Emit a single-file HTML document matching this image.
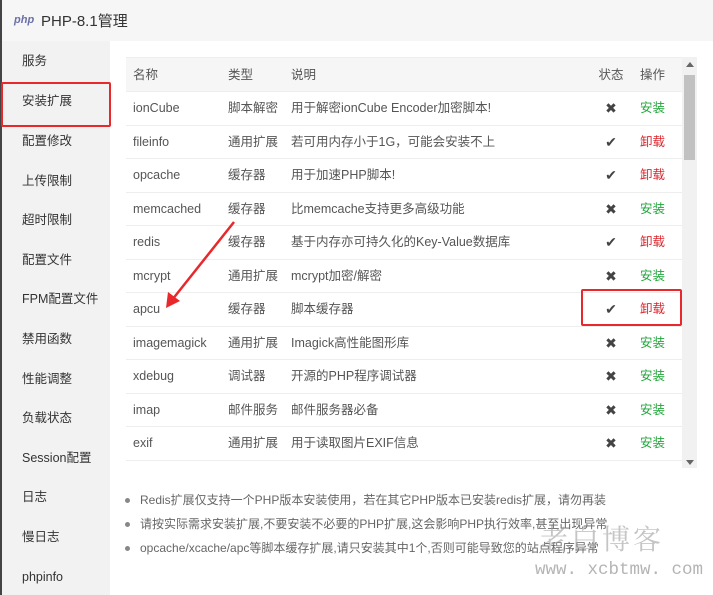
<!DOCTYPE html><html><head><meta charset="utf-8"><style>
*{margin:0;padding:0;box-sizing:border-box}
body{width:713px;height:595px;overflow:hidden;background:#fff;font-family:"Liberation Sans","Noto Sans CJK SC",sans-serif;position:relative;color:#555}
.hdr{position:absolute;left:0;top:0;width:713px;height:41px;background:#f6f6f6;border-left:2px solid #444}
.hdr .logo{position:absolute;left:12px;top:14px;font:italic bold 11px "Liberation Sans",sans-serif;color:#6a6fa8}
.hdr .t{position:absolute;left:39px;top:10px;font-size:15px;color:#333}
.side{position:absolute;left:0;top:41px;width:110px;height:554px;background:#f2f2f2;border-left:2px solid #444}
.side div{position:absolute;left:20px;font-size:12.5px;color:#333;line-height:16px}
.redbox{position:absolute;border:2px solid #e8282a;border-radius:2px}
table{position:absolute;left:0;top:0;width:556px;border-collapse:collapse;font-size:12.5px}
td{height:33.5px;border-bottom:1px solid #eee;color:#555;white-space:nowrap;vertical-align:middle;line-height:16px}
tr.h td{background:#f6f6f6;color:#555}
.c1{padding-left:7px;width:102px}.c2{width:63px}.st{width:42px;text-align:center;color:#444;font-size:14px}.op{width:50px;padding-left:8px}
.g{color:#20a53a}.r{color:#d9282f}
.wrap{position:absolute;left:126px;top:57px;width:556px;height:411px;overflow:hidden;border-top:1px solid #eee}
.sb{position:absolute;left:682px;top:57px;width:15px;height:411px;background:#f1f1f1}
.thumb{position:absolute;left:684px;top:75px;width:11px;height:85px;background:#c1c1c1}
.notes{position:absolute;left:125px;font-size:12px;color:#666;white-space:nowrap}
.notes span{display:inline-block;width:5px;height:5px;border-radius:50%;background:#888;margin-right:10px;vertical-align:middle}
.wm1{position:absolute;left:540px;top:518px;font:28px "Noto Serif CJK SC",serif;color:rgba(150,150,150,.55);letter-spacing:3px;white-space:nowrap}
.wm2{position:absolute;left:535px;top:560px;font:17.5px "Liberation Mono",monospace;color:rgba(140,140,140,.65);white-space:nowrap}
</style></head><body>
<div class="hdr"><span class="logo">php</span><span class="t">PHP-8.1管理</span></div>
<div class="side">
<div style="top:12px">服务</div><div style="top:52px">安装扩展</div><div style="top:92px">配置修改</div><div style="top:132px">上传限制</div><div style="top:171px">超时限制</div><div style="top:211px">配置文件</div><div style="top:250px">FPM配置文件</div><div style="top:290px">禁用函数</div><div style="top:330px">性能调整</div><div style="top:369px">负载状态</div><div style="top:409px">Session配置</div><div style="top:448px">日志</div><div style="top:488px">慢日志</div><div style="top:528px">phpinfo</div>
</div>
<div style="position:absolute;left:110px;top:41px;width:603px;height:554px;background:#fff"></div>
<div class="wrap"><table>
<tr class="h"><td class="c1">名称</td><td class="c2">类型</td><td>说明</td><td class="st" style="font-size:12.5px">状态</td><td class="op" style="color:#555">操作</td></tr>
<tr><td class="c1">ionCube</td><td class="c2">脚本解密</td><td>用于解密ionCube Encoder加密脚本!</td><td class="st">✖</td><td class="op g">安装</td></tr>
<tr><td class="c1">fileinfo</td><td class="c2">通用扩展</td><td>若可用内存小于1G，可能会安装不上</td><td class="st">✔</td><td class="op r">卸载</td></tr>
<tr><td class="c1">opcache</td><td class="c2">缓存器</td><td>用于加速PHP脚本!</td><td class="st">✔</td><td class="op r">卸载</td></tr>
<tr><td class="c1">memcached</td><td class="c2">缓存器</td><td>比memcache支持更多高级功能</td><td class="st">✖</td><td class="op g">安装</td></tr>
<tr><td class="c1">redis</td><td class="c2">缓存器</td><td>基于内存亦可持久化的Key-Value数据库</td><td class="st">✔</td><td class="op r">卸载</td></tr>
<tr><td class="c1">mcrypt</td><td class="c2">通用扩展</td><td>mcrypt加密/解密</td><td class="st">✖</td><td class="op g">安装</td></tr>
<tr><td class="c1">apcu</td><td class="c2">缓存器</td><td>脚本缓存器</td><td class="st">✔</td><td class="op r">卸载</td></tr>
<tr><td class="c1">imagemagick</td><td class="c2">通用扩展</td><td>Imagick高性能图形库</td><td class="st">✖</td><td class="op g">安装</td></tr>
<tr><td class="c1">xdebug</td><td class="c2">调试器</td><td>开源的PHP程序调试器</td><td class="st">✖</td><td class="op g">安装</td></tr>
<tr><td class="c1">imap</td><td class="c2">邮件服务</td><td>邮件服务器必备</td><td class="st">✖</td><td class="op g">安装</td></tr>
<tr><td class="c1">exif</td><td class="c2">通用扩展</td><td>用于读取图片EXIF信息</td><td class="st">✖</td><td class="op g">安装</td></tr>
<tr><td class="c1">intl</td><td class="c2">通用扩展</td><td>提供国际化支持</td><td class="st">✖</td><td class="op g">安装</td></tr>
</table></div>
<div class="sb"></div><div class="thumb"></div>
<div style="position:absolute;left:686px;top:62px;border:4px solid transparent;border-bottom:5px solid #666;border-top:0"></div>
<div style="position:absolute;left:686px;top:460px;border:4px solid transparent;border-top:5px solid #666;border-bottom:0"></div>
<div class="redbox" style="left:1px;top:82px;width:110px;height:45px"></div>
<div class="redbox" style="left:581px;top:289px;width:101px;height:37px"></div>
<svg style="position:absolute;left:0;top:0" width="713" height="595"><line x1="234" y1="222" x2="172" y2="300" stroke="#e8282a" stroke-width="2.5"/><polygon points="166,308 168,292 180,301" fill="#e8282a"/></svg>
<div class="notes" style="top:491px"><span></span>Redis扩展仅支持一个PHP版本安装使用，若在其它PHP版本已安装redis扩展，请勿再装</div>
<div class="notes" style="top:515px"><span></span>请按实际需求安装扩展,不要安装不必要的PHP扩展,这会影响PHP执行效率,甚至出现异常</div>
<div class="notes" style="top:539px"><span></span>opcache/xcache/apc等脚本缓存扩展,请只安装其中1个,否则可能导致您的站点程序异常</div>
<div class="wm1">老白博客</div>
<div class="wm2">www. xcbtmw. com</div>
</body></html>
